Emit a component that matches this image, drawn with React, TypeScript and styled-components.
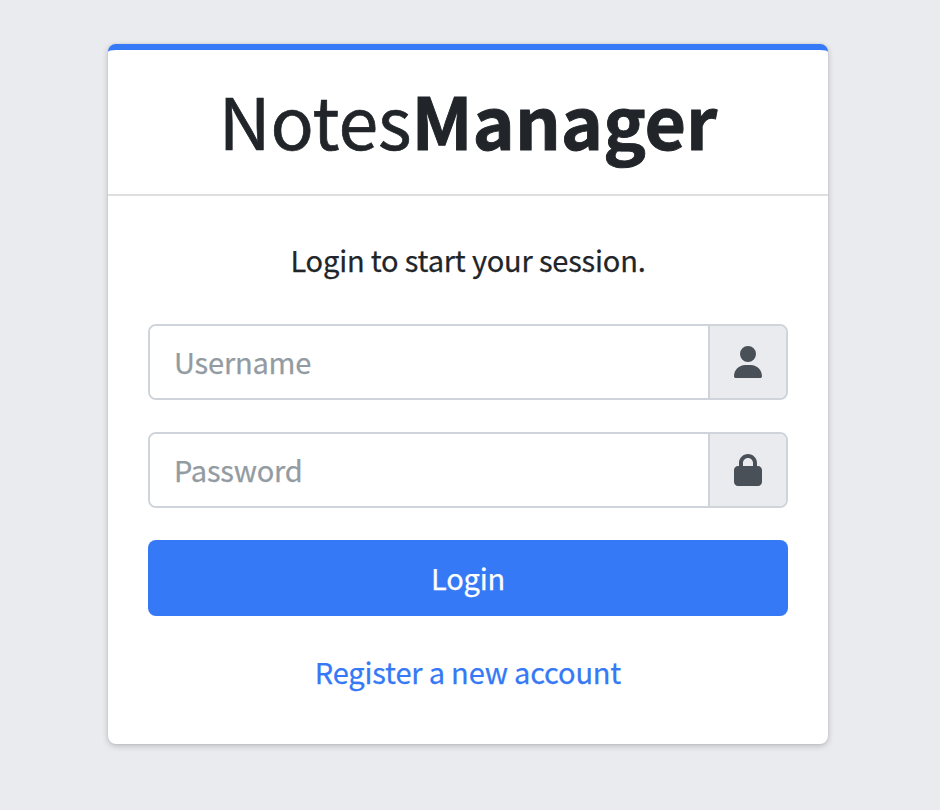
import React from "react";
import styled, { createGlobalStyle } from "styled-components";

const GlobalStyle = createGlobalStyle`
  *, *::before, *::after { box-sizing: border-box; }
  body {
    margin: 0;
    background: #eaebef;
    color: #212529;
    font-family: "Noto Sans CJK SC", sans-serif;
    font-size: 29px;
    letter-spacing: -0.18px;
    line-height: 48px;
    -webkit-text-stroke: 0.25px currentColor;
  }
`;

const Page = styled.main`
  display: flex;
  justify-content: center;
  height: 810px;
  padding: 44px 4px 0 0;
  overflow: hidden;
`;

const Card = styled.section`
  width: 720px;
  height: 700px;
  background: #fff;
  border-top: 6px solid #3579f6;
  border-radius: 8px;
  box-shadow: 0 0 2px rgba(0, 0, 0, 0.13), 0 2px 6px rgba(0, 0, 0, 0.2);
`;

const CardHeader = styled.header`
  height: 146px;
  border-bottom: 2px solid #dfdfdf;
  text-align: center;
`;

const Brand = styled.h1`
  margin: 0;
  padding-top: 19px;
  font-size: 71.6px;
  font-weight: 400;
  letter-spacing: 0;
  line-height: 100px;
  -webkit-text-stroke: 0.7px currentColor;
  b {
    font-weight: 700;
    -webkit-text-stroke: 0.9px currentColor;
  }
`;

const CardBody = styled.div`
  display: flex;
  flex-direction: column;
  padding: 39px 40px 40px;
`;

const Message = styled.p`
  margin: 0 0 41px;
  text-align: center;
`;

const InputGroup = styled.div`
  display: flex;
  height: 76px;
  margin-bottom: 32px;
  border: 2px solid #ced4da;
  border-radius: 8px;
  overflow: hidden;
`;

const Input = styled.input`
  flex: 1;
  min-width: 0;
  border: 0;
  outline: 0;
  padding: 0 24px 2px;
  font: inherit;
  letter-spacing: inherit;
  color: #495057;
  &::placeholder { color: #939ba2; opacity: 1; }
`;

const Addon = styled.span`
  display: flex;
  align-items: center;
  justify-content: center;
  width: 78px;
  padding-right: 1px;
  border-left: 2px solid #ced4da;
  background: #eaebef;
  color: #495057;
`;

const Icon = styled.svg`
  width: 28px;
  height: 32px;
  fill: currentColor;
`;

const Button = styled.button`
  height: 76px;
  padding: 0 0 2px;
  border: 0;
  border-radius: 8px;
  background: #3579f6;
  color: #fff;
  font: inherit;
  letter-spacing: inherit;
`;

const RegisterLink = styled.a`
  margin-top: 31px;
  text-align: center;
  color: #3579f6;
  text-decoration: none;
`;

export default function App() {
  return (
    <Page>
      <GlobalStyle />
      <Card>
        <CardHeader>
          <Brand>Notes<b>Manager</b></Brand>
        </CardHeader>
        <CardBody>
          <Message>Login to start your session.</Message>
          <InputGroup>
            <Input placeholder="Username" aria-label="Username" />
            <Addon>
              <Icon viewBox="0 0 448 512">
                <path d="M224 256A128 128 0 1 0 224 0a128 128 0 0 0 0 256zm-45.700 48C79.800 304 0 383.800 0 482.300 0 498.700 13.300 512 29.700 512h388.600c16.400 0 29.700-13.300 29.700-29.700C448 383.800 368.200 304 269.700 304h-91.400z" />
              </Icon>
            </Addon>
          </InputGroup>
          <InputGroup>
            <Input type="password" placeholder="Password" aria-label="Password" />
            <Addon>
              <Icon viewBox="0 0 448 512">
                <path d="M144 144v48h160v-48c0-44.200-35.800-80-80-80s-80 35.800-80 80zm-64 48v-48C80 64.500 144.500 0 224 0s144 64.500 144 144v48h16c35.300 0 64 28.700 64 64v192c0 35.300-28.700 64-64 64H64c-35.300 0-64-28.700-64-64V256c0-35.300 28.700-64 64-64h16z" />
              </Icon>
            </Addon>
          </InputGroup>
          <Button type="button">Login</Button>
          <RegisterLink href="#">Register a new account</RegisterLink>
        </CardBody>
      </Card>
    </Page>
  );
}
